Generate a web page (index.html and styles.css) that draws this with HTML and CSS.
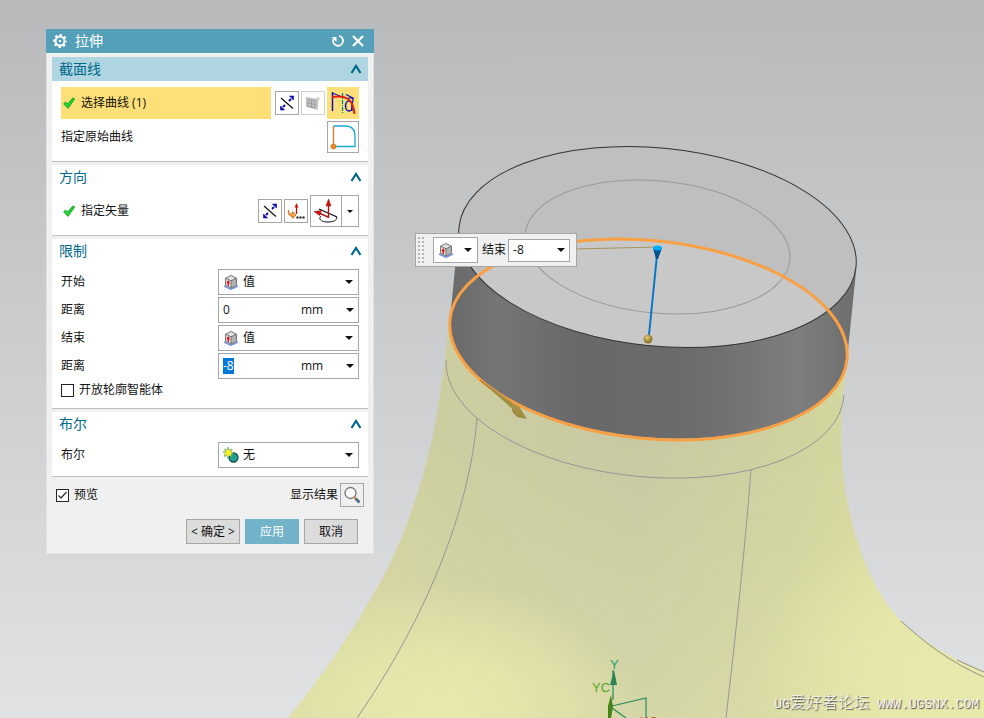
FILE: index.html
```
<!DOCTYPE html>
<html lang="zh-CN">
<head>
    <meta charset="UTF-8">
    <title>拉伸</title>
    <link rel="stylesheet" href="styles.css">
</head>
<body>
    <!-- 公共图标 -->
    <svg class="defs" width="0" height="0" aria-hidden="true">
        <symbol id="i-check" viewBox="0 0 12 12"><path d="M.6 6.800 2.600 5l2 2L10 .8 11.700 2 5 11.400Z" fill="#1fd42f" stroke="#0b9a1c" stroke-width=".8"/></symbol>
        <symbol id="i-up" viewBox="0 0 12 10"><path d="M1.500 9 6 2l4.500 7" fill="none" stroke="#00688b" stroke-width="2.200"/></symbol>
        <symbol id="i-arrow" viewBox="0 0 8 4"><path d="M0 0h8L4 4Z" fill="#111"/></symbol>
        <symbol id="i-reverse" viewBox="0 0 16 16"><path d="M2 3 14 13.500" stroke="#111" stroke-width="1.200"/><path d="m10 6 2-2M4 12l2-2" stroke="#0a0aa8" stroke-width="2"/><path d="M14.500 1v4L10.500 1ZM1.500 15v-4l4 4Z" fill="#0a0aa8" stroke="#0a0aa8" stroke-width=".6"/></symbol>
        <symbol id="i-cube" viewBox="0 0 16 16"><path d="m1 12 7 3.200 7-3.200" fill="none" stroke="#7093dc" stroke-width="1.600"/><path d="M2.500 4.200 8 1.500l5.500 2.700v7L8 14l-5.500-2.800Z" fill="#e0e0e0"/><path d="m8 6.800 5.500-2.600v7L8 14Z" fill="#b4b4b4"/><path d="M2.500 4.200 8 1.500l5.500 2.700v7L8 14l-5.500-2.800ZM2.500 4.200 8 6.800l5.500-2.600M8 6.800V14" fill="none" stroke="#6a6a6a" stroke-width=".9" stroke-linejoin="round"/><path d="M5.200 12V8" stroke="#e00000" stroke-width="1.200"/><path d="m3.400 9 1.800-3L7 9.500Z" fill="#e00000"/></symbol>
    </svg>

    <!-- 模型视图 -->
    <svg class="scene" viewBox="0 0 984 718" preserveAspectRatio="xMinYMin slice">
        <defs>
            <linearGradient id="bg" x1="0" y1="0" x2="0" y2="1"><stop offset="0" stop-color="#b8b9bb"/><stop offset="1" stop-color="#e1e2e4"/></linearGradient>
            <linearGradient id="body" x1="300" y1="0" x2="984" y2="0" gradientUnits="userSpaceOnUse"><stop offset="0" stop-color="#d3d49f"/><stop offset=".24" stop-color="#cccda0"/><stop offset=".5" stop-color="#c8c9a2"/><stop offset=".7" stop-color="#cfd19f"/><stop offset="1" stop-color="#dfe19e"/></linearGradient>
            <linearGradient id="low" x1="0" y1="440" x2="0" y2="718" gradientUnits="userSpaceOnUse"><stop offset="0" stop-color="#e8e9ae" stop-opacity="0"/><stop offset="1" stop-color="#e8e9ae" stop-opacity=".4"/></linearGradient>
            <radialGradient id="glow"><stop offset="0" stop-color="#e8e9ac"/><stop offset=".4" stop-color="#e8e9ac" stop-opacity=".75"/><stop offset="1" stop-color="#e8e9ac" stop-opacity="0"/></radialGradient>
            <linearGradient id="wall" x1="450" y1="0" x2="856" y2="0" gradientUnits="userSpaceOnUse"><stop offset="0" stop-color="#6a6a6a"/><stop offset=".12" stop-color="#757575"/><stop offset=".32" stop-color="#686868"/><stop offset=".6" stop-color="#6c6c6c"/><stop offset=".86" stop-color="#7e7e7e"/><stop offset="1" stop-color="#6d6d6d"/></linearGradient>
            <radialGradient id="ball" cx=".4" cy=".35"><stop offset="0" stop-color="#e0cd80"/><stop offset=".6" stop-color="#b39d4c"/><stop offset="1" stop-color="#8c7730"/></radialGradient>
            <linearGradient id="gold" x1="0" y1="1" x2="1" y2="0"><stop offset="0" stop-color="#82702b"/><stop offset="1" stop-color="#c6ad55"/></linearGradient>
            <clipPath id="bodyClip"><path d="M449 322C446 348 445 365 439 400C429 470 404 545 370 600C345 643 315 686 288 718H984V672C950 658 925 643 901 621C872 590 857 550 845 491C840 455 841 425 843 395L848 350Z"/></clipPath>
            <clipPath id="topClip"><ellipse cx="657.500" cy="247" rx="199.500" ry="99" transform="rotate(5.700 657.500 247)"/></clipPath>
        </defs>
        <rect width="984" height="718" fill="url(#bg)"/>
        <!-- 瓶身 -->
        <g clip-path="url(#bodyClip)">
            <rect x="280" y="310" width="704" height="408" fill="url(#body)"/>
            <rect x="280" y="310" width="704" height="408" fill="url(#low)"/>
            <ellipse cx="440" cy="705" rx="200" ry="125" fill="url(#glow)"/>
            <ellipse cx="950" cy="680" rx="210" ry="170" fill="url(#glow)"/>
        </g>
        <path d="M901 621C925 643 950 662 984 677M957 660l27 12" fill="none" stroke="#8f9180"/>
        <g fill="none" stroke="#96969a">
            <path d="M446 360A199.500 99 5.700 0 0 844 395"/>
            <path d="M477 418C470 510 425 620 357 718M751 469C745 550 735 640 726 718"/>
        </g>
        <!-- 瓶口 -->
        <path d="M459 227 450 319.700A199.500 99 5.700 0 0 847 359.300L856.500 267Z" fill="url(#wall)"/>
        <g clip-path="url(#topClip)">
            <rect x="450" y="140" width="420" height="220" fill="#bfbfbf"/>
            <ellipse cx="648.500" cy="339.500" rx="199.500" ry="99" fill="#c8c8c8" transform="rotate(5.700 648.500 339.500)"/>
        </g>
        <ellipse cx="657.500" cy="247" rx="199.500" ry="99" fill="none" stroke="#333" transform="rotate(5.700 657.500 247)"/>
        <ellipse cx="657.500" cy="247" rx="133" ry="66" fill="none" stroke="#9a9a9a" transform="rotate(5.700 657.500 247)"/>
        <path d="M575 249 657 247" stroke="#a8935a"/>
        <ellipse cx="648.500" cy="339.500" rx="199.500" ry="99" fill="none" stroke="#faa044" stroke-width="3" transform="rotate(5.700 648.500 339.500)"/>
        <!-- 拖动手柄 -->
        <path d="M657 255 649 335" stroke="#0877c8" stroke-width="2"/>
        <path d="m653 248 3 11h2l4-11Z" fill="#00518d"/>
        <ellipse cx="657.500" cy="248" rx="4.500" ry="2.500" fill="#00aeff"/>
        <circle cx="648" cy="339" r="4.500" fill="url(#ball)"/>
        <path d="m480 380 35 25 4 2 7 11.500-9-2-4-4.500-1-4Z" fill="url(#gold)" stroke="#8b7630" stroke-width=".5"/>
        <!-- 坐标系 -->
        <path d="M613 670v30M612 706l34-8v20M612 708l14 10" fill="none" stroke="#2b8a5c" stroke-width="1.200"/>
        <path d="m614 670 3 15h-7Z" fill="#2b8252"/>
        <path d="m611 695 2 12-2 11h-3v-12Z" fill="#478419"/>
        <text x="610" y="669" class="axis-y">Y</text>
        <text x="592" y="692" class="axis-yc">YC</text>
        <text x="640" y="726" class="axis-xc">XC</text>
    </svg>

    <!-- 拉伸对话框 -->
    <form class="dialog">
        <div class="titlebar">
            <svg class="gear" viewBox="0 0 16 16" width="16" height="16"><g fill="none" stroke="#fff"><circle cx="8" cy="8" r="6" stroke-width="2" stroke-dasharray="2.360 2.352" stroke-dashoffset="1.180"/><circle cx="8" cy="8" r="4.500" stroke-width="2"/></g><circle cx="8" cy="8" r="1.200" fill="#fff"/></svg>
            <h1>拉伸</h1>
            <button type="button" aria-label="重置"><svg viewBox="0 0 14 14" width="14" height="14"><path d="M8 1.800A5 5 0 1 1 2.300 5.200" fill="none" stroke="#fff" stroke-width="1.800"/><path d="M.5 3h5v5Z" fill="#fff"/></svg></button>
            <button type="button" aria-label="关闭"><svg viewBox="0 0 14 14" width="14" height="14"><path d="m2 2 10 10M12 2 2 12" stroke="#fff" stroke-width="2.200"/></svg></button>
        </div>

        <section class="group">
            <h2 class="current">截面线<svg width="12" height="10"><use href="#i-up"/></svg></h2>
            <div class="row tall">
                <div class="pick"><svg width="12" height="12"><use href="#i-check"/></svg>选择曲线 (1)</div>
                <button type="button" class="tool" aria-label="反向"><svg width="16" height="16"><use href="#i-reverse"/></svg></button>
                <button type="button" class="tool off" aria-label="绘制截面"><svg viewBox="0 0 16 16" width="16" height="16"><path d="m1 2 12 2v11L1 12Z" fill="#c4c4c4"/><path d="m3 4.500 7 1.300v7L3 11.200ZM6.500 5v7M3 8l7 1.500" fill="none" stroke="#9a9a9a"/><path d="m13 1 .7 2.300L16 4l-2.300.7L13 7l-.7-2.300L10 4l2.300-.7Z" fill="#cdc6b2"/></svg></button>
                <button type="button" class="tool big on" aria-label="曲线"><svg viewBox="0 0 32 32" width="32" height="32"><path d="M5.500 5v19" stroke="#1010b0" stroke-width="1.500"/><path d="m5 6 8 3M19 7.500l8 4" fill="none" stroke="#1010b0" stroke-width="1.200"/><path d="M15.500 6v20" stroke="#008b8b" stroke-width="1.300" stroke-dasharray="4 1 1 1"/><ellipse cx="22" cy="19" rx="3.500" ry="5" fill="none" stroke="#1010b0" stroke-width="1.500"/><path d="M20 11.500c3-1 6-1 6 1.500 0 3-2 3-1 11" fill="none" stroke="#1010b0" stroke-width="1.200"/><path d="M5 10c13-2 21 1 22.500 17" fill="none" stroke="#e82010" stroke-width="2"/></svg></button>
            </div>
            <div class="row tall">
                <span class="label">指定原始曲线</span>
                <button type="button" class="tool big" aria-label="指定原始曲线"><svg viewBox="0 0 30 30" width="30" height="30"><path d="M5.500 4H17q10 0 10 10v10.500H6" fill="none" stroke="#17a9cf" stroke-width="1.300"/><path d="M5.500 4v20" stroke="#e07a1c" stroke-width="1.300"/><circle cx="5.500" cy="24.500" r="2.500" fill="#f58a1f" stroke="#b85a0a" stroke-width=".6"/></svg></button>
            </div>
        </section>

        <section class="group">
            <h2>方向<svg width="12" height="10"><use href="#i-up"/></svg></h2>
            <div class="row high">
                <div class="label mark"><svg width="12" height="12"><use href="#i-check"/></svg>指定矢量</div>
                <button type="button" class="tool" aria-label="反向"><svg width="16" height="16"><use href="#i-reverse"/></svg></button>
                <button type="button" class="tool" aria-label="矢量对话框"><svg viewBox="0 0 18 18" width="18" height="18"><path d="M9.500 12V5" stroke="#b01010" stroke-width="1.300"/><path d="m9.500 1 2 4.500h-4Z" fill="#d81414"/><path d="M1.500 8c0 3.500 1.500 4 4 3.500v-2l3.500 3.500-3.500 3.500v-2C2.500 14.500.5 12 1.500 8Z" fill="#f8a53c" stroke="#c25a10" stroke-width=".7"/><path d="M9.500 14.500h2v2h-2zm3 0h2v2h-2zm3 0h2v2h-2z" fill="#111"/></svg></button>
                <div class="split">
                    <button type="button" aria-label="自动判断的矢量"><svg viewBox="0 0 30 30" width="30" height="30"><path d="M10 20c-3 3 0 6 7 6 8 0 11-4 7-6" fill="none" stroke="#111"/><path d="m8 13 18 8" stroke="#111" stroke-width="1.200"/><path d="M17.500 22V9M17 21 8 17" stroke="#b01515" stroke-width="1.400"/><path d="m17.500 3 2.500 7h-5ZM3 15.500l7.500-1-2 5Z" fill="#d41515" stroke="#7d0808" stroke-width=".5"/></svg></button>
                    <button type="button" class="more" aria-label="更多矢量"><svg width="6" height="3"><use href="#i-arrow"/></svg></button>
                </div>
            </div>
        </section>

        <section class="group">
            <h2>限制<svg width="12" height="10"><use href="#i-up"/></svg></h2>
            <div class="row field">
                <label class="label" for="start">开始</label>
                <div class="combo"><svg class="kind" width="16" height="16"><use href="#i-cube"/></svg><select id="start"><option>值</option></select></div>
            </div>
            <div class="row field">
                <label class="label" for="startDist">距离</label>
                <div class="combo"><input type="text" id="startDist" value="0"><span class="unit">mm</span><button type="button" aria-label="选项"><svg width="8" height="4"><use href="#i-arrow"/></svg></button></div>
            </div>
            <div class="row field">
                <label class="label" for="end">结束</label>
                <div class="combo"><svg class="kind" width="16" height="16"><use href="#i-cube"/></svg><select id="end"><option>值</option></select></div>
            </div>
            <div class="row field">
                <label class="label" for="endDist">距离</label>
                <div class="combo"><input type="text" id="endDist" value="-8"><span class="unit">mm</span><button type="button" aria-label="选项"><svg width="8" height="4"><use href="#i-arrow"/></svg></button></div>
            </div>
            <label class="tick"><input type="checkbox">开放轮廓智能体</label>
        </section>

        <section class="group">
            <h2>布尔<svg width="12" height="10"><use href="#i-up"/></svg></h2>
            <div class="row field last">
                <label class="label" for="bool">布尔</label>
                <div class="combo"><svg class="kind" viewBox="0 0 16 16" width="16" height="16"><circle cx="10.500" cy="10.500" r="4.500" fill="#1fa08c" stroke="#114c46" stroke-width="1.300"/><path d="m5 0 1.200 3 3-1-1.200 3 3 1.200-3 1.200L9 10 6 8.700 5 11.500 4 8.500l-3 1L2.300 6.500 0 5l2.500-.5L1.500 2 4 3Z" fill="#f4f02a" stroke="#2d8d70" stroke-width=".5"/></svg><select id="bool"><option>无</option></select></div>
            </div>
        </section>

        <div class="preview">
            <label class="tick"><input type="checkbox" checked>预览</label>
            <label for="result">显示结果</label>
            <button type="button" id="result" class="tool"><svg viewBox="0 0 18 18" width="18" height="18"><path d="m11 11 2 2" stroke="#f5a623" stroke-width="2.500"/><path d="m12.500 12.500 4 4" stroke="#53698c" stroke-width="2.800"/><circle cx="7.500" cy="7" r="5.500" fill="#fafafa" stroke="#777" stroke-width="1.300"/></svg></button>
        </div>
        <div class="actions">
            <button type="submit">&lt; 确定 &gt;</button>
            <button type="button" class="apply">应用</button>
            <button type="button">取消</button>
        </div>
    </form>

    <!-- 浮动输入条 -->
    <div class="floatbar">
        <svg class="grip" viewBox="0 0 8 28" width="8" height="28"><path d="M2 1v27M6 1v27" stroke="#b5b5b5" stroke-width="2" stroke-dasharray="2 2"/></svg>
        <button type="button" class="type" aria-label="值"><svg width="16" height="16"><use href="#i-cube"/></svg><svg width="8" height="4"><use href="#i-arrow"/></svg></button>
        <label for="quick">结束</label>
        <div class="combo"><input type="text" id="quick" value="-8"><button type="button" aria-label="选项"><svg width="8" height="4"><use href="#i-arrow"/></svg></button></div>
    </div>

    <p class="watermark"><span>UG</span>爱好者论坛<span> WWW.UGSNX.COM</span></p>

    <script>
        // 默认选中结束距离
        var _end = document.getElementById("endDist");
        _end.focus();
        _end.select();
    </script>
</body>
</html>
```
FILE: styles.css
```
*{margin:0;padding:0;box-sizing:border-box;}
body{height:100vh;overflow:hidden;position:relative;
    font-family:"Open Sans","Noto Sans CJK SC",sans-serif;
    font-size:12px;line-height:16px;color:#111;background:#cdced0;}
svg{display:block;flex:none;}
button,input,select{font:inherit;color:inherit;border:0;border-radius:0;background:none;outline:none;}
button{display:flex;align-items:center;justify-content:center;}
.defs{position:absolute;}
.scene{width:100%;height:100%;}
.axis-y,.axis-yc,.axis-xc{font:13px "Liberation Sans",sans-serif;}
.axis-y{fill:#20a070;}
.axis-yc{fill:#5aa52c;}
.axis-xc{fill:#c8552b;}

/* 对话框 */
.dialog{position:absolute;left:46px;top:29px;width:328px;
    background:#f0f0f0;border:1px solid #e2e2e2;border-top:0;}
.titlebar{display:flex;align-items:center;gap:6px;height:24px;
    margin:0 -1px 4px;padding:0 9px 0 6px;background:#55a0b9;color:#fff;}
.titlebar h1{flex:1;padding-left:1px;font-size:14px;font-weight:400;line-height:24px;}
.titlebar button{width:14px;height:24px;}
.group{margin:0 5px 3px;background:#fff;border-bottom:1px solid #c0c0c0;}
.group h2{display:flex;align-items:center;justify-content:space-between;height:24px;margin-bottom:6px;
    padding:0 6px 0 7px;font-size:14px;font-weight:400;color:#00688b;}
.group h2.current{background:#afd6e0;}
.row{display:flex;align-items:center;gap:2px;padding:0 9px;}
.label{flex:1;}
.row.tall{height:34px;padding-bottom:2px;}
.row.tall:last-child{height:40px;padding-bottom:8px;}
.row.high{height:40px;padding-bottom:8px;}
.pick{display:flex;flex:1;align-items:center;gap:6px;height:32px;margin-right:2px;padding-left:2px;background:#ffdf78;}
.mark{display:flex;align-items:center;gap:6px;padding-left:2px;}
.tool{width:24px;height:24px;border:1px solid #a6a6a6;background:#fff;}
.tool.off{border-color:#d0d0d0;}
.tool.big{width:32px;height:32px;}
.tool.on{border:0;background:#ffdf78;}
.split{display:flex;height:32px;border:1px solid #a6a6a6;}
.split button{width:30px;}
.split .more{width:17px;border-left:1px solid #a6a6a6;}

/* 下拉框与输入框 */
.row.field{height:28px;padding-bottom:2px;}
.row.field.last{height:34px;padding-bottom:8px;}
.combo{display:flex;align-items:center;position:relative;width:141px;height:26px;
    border:1px solid #a6a6a6;background:#fff;}
.combo .kind{position:absolute;left:4px;pointer-events:none;}
.combo select{width:100%;height:100%;padding-left:24px;appearance:none;
    background:url("data:image/svg+xml,%3Csvg xmlns='http://www.w3.org/2000/svg' width='8' height='4'%3E%3Cpath d='M0 0h8L4 4Z' fill='%23111'/%3E%3C/svg%3E") no-repeat right 5px center;}
.combo input{flex:1;width:0;min-width:0;padding-left:4px;}
.combo input::selection{background:#0078d7;color:#fff;}
.combo button{width:16px;height:100%;}
.unit{width:41px;}
.tick{display:flex;align-items:center;gap:5px;}
.tick input{appearance:none;width:13px;height:13px;border:1px solid #222;background:#fff;}
.tick input:checked{background:#fff url("data:image/svg+xml,%3Csvg xmlns='http://www.w3.org/2000/svg' width='11' height='11'%3E%3Cpath d='m1.500 5.500 2.500 2.500 5.500-6' fill='none' stroke='%23333' stroke-width='1.300'/%3E%3C/svg%3E") center;}
.group .tick{height:27px;padding:0 9px 9px;}

.preview{display:flex;align-items:center;height:24px;margin-top:6px;padding:0 9px;}
.preview .tick{flex:1;}
.preview .tool{margin-left:2px;background:#f0f0f0;}
.actions{display:flex;justify-content:flex-end;gap:5px;padding:12px 15px 9px;}
.actions button{width:54px;height:25px;border:1px solid #a6a6a6;background:#dcdcdc;white-space:nowrap;}
.actions .apply{border-color:#73b3c9;background:#73b3c9;color:#fff;}

/* 浮动输入条 */
.floatbar{position:absolute;left:415px;top:233px;display:flex;align-items:center;gap:2px;
    height:34px;padding:0 6px 0 1px;border:1px solid #a6a6a6;background:#f0f0f0;}
.floatbar .type{justify-content:space-between;width:45px;height:26px;margin:0 2px 0 6px;padding:0 5px 0 4px;
    border:1px solid #a6a6a6;background:#fff;}
.floatbar .combo{width:62px;height:23px;}

.watermark{position:absolute;right:5px;bottom:3px;display:flex;align-items:baseline;
    font-family:"Noto Sans CJK SC",sans-serif;font-size:16px;line-height:20px;font-weight:300;
    color:#f4f4f4;text-shadow:1px 1px 1px #444;white-space:pre;}
.watermark span{font-family:"Liberation Mono",monospace;font-size:13px;}
```
